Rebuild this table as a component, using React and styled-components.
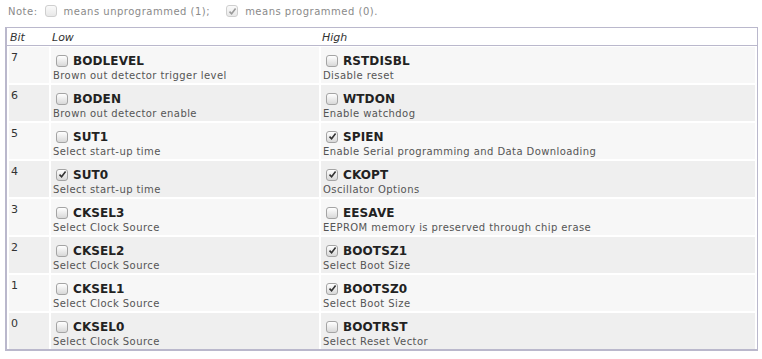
import React from "react";
import styled, { createGlobalStyle } from "styled-components";

const Global = createGlobalStyle`
  html, body { margin: 0; padding: 0; background: #fff; }
  body { font-family: "DejaVu Sans", Verdana, sans-serif; }
`;

const Page = styled.div`
  padding: 0 4px 0 5px;
  width: 762px;
  box-sizing: border-box;
`;

const Note = styled.div`
  display: flex;
  align-items: center;
  height: 22px;
  margin-bottom: 5px;
  padding-left: 3px;
  font-size: 10px;
  letter-spacing: 0.5px;
  color: #8a8a8a;
  gap: 7px;
`;

const NoteText = styled.span`
  margin-right: 9px;
`;

const Panel = styled.div`
  border: 1px solid #bab8cc;
  border-left-width: 2px;
  border-bottom-width: 2px;
  padding: 0 2px;
  width: 753px;
  box-sizing: border-box;
`;

const Grid = styled.div`
  display: grid;
  grid-template-columns: 40px 268px 1fr;
  column-gap: 2px;
  row-gap: 2px;
`;

const Header = styled.div`
  display: grid;
  grid-template-columns: 40px 268px 1fr;
  column-gap: 2px;
  height: 18px;
  align-items: center;
  border-bottom: 1px solid #bab8cc;
  margin: 0 -2px 1px -2px;
  padding: 2px 2px 0;
  box-sizing: border-box;
`;

const HeadCell = styled.div`
  font-style: italic;
  font-size: 11px;
  color: #333;
  padding-left: 1px;
`;

const Cell = styled.div`
  height: 36px;
  box-sizing: border-box;
  background: ${(p) => (p.$alt ? "#efefef" : "#f7f7f7")};
  padding: ${(p) => (p.$bit ? "4px 0 0 2px" : "6px 0 0 2px")};
  font-size: 11px;
  color: #333;
`;

const BitNum = styled.div`
  line-height: 13px;
`;

const NameLine = styled.div`
  display: flex;
  align-items: center;
  height: 15px;
  gap: 5px;
  padding-left: 3px;
`;

const Name = styled.span`
  font-weight: bold;
  font-size: 12px;
  color: #222;
  letter-spacing: 0.1px;
`;

const Desc = styled.div`
  font-size: 10px;
  line-height: 13px;
  color: #555;
  letter-spacing: 0.42px;
  margin-top: 1px;
`;

const Box = styled.span`
  display: inline-flex;
  align-items: center;
  justify-content: center;
  width: 12px;
  height: 12px;
  box-sizing: border-box;
  border-radius: 3px;
  border: 1px solid ${(p) => (p.$disabled ? "#cfcfcf" : "#a4a4a4")};
  background: ${(p) =>
    p.$disabled
      ? "linear-gradient(#fafafa, #e8e8e8)"
      : "linear-gradient(#ffffff, #d8d8d8)"};
  flex: none;
`;

function Check({ checked, disabled }) {
  return (
    <Box $disabled={disabled}>
      {checked && (
        <svg width="9" height="9" viewBox="0 0 9 9">
          <path
            d="M1.5 4.6 L3.6 6.8 L7.6 1.6"
            fill="none"
            stroke={disabled ? "#9a9a9a" : "#333"}
            strokeWidth="1.6"
          />
        </svg>
      )}
    </Box>
  );
}

const rows = [
  [7, ["BODLEVEL", "Brown out detector trigger level", false], ["RSTDISBL", "Disable reset", false]],
  [6, ["BODEN", "Brown out detector enable", false], ["WTDON", "Enable watchdog", false]],
  [5, ["SUT1", "Select start-up time", false], ["SPIEN", "Enable Serial programming and Data Downloading", true]],
  [4, ["SUT0", "Select start-up time", true], ["CKOPT", "Oscillator Options", true]],
  [3, ["CKSEL3", "Select Clock Source", false], ["EESAVE", "EEPROM memory is preserved through chip erase", false]],
  [2, ["CKSEL2", "Select Clock Source", false], ["BOOTSZ1", "Select Boot Size", true]],
  [1, ["CKSEL1", "Select Clock Source", false], ["BOOTSZ0", "Select Boot Size", true]],
  [0, ["CKSEL0", "Select Clock Source", false], ["BOOTRST", "Select Reset Vector", false]],
];

function Fuse({ data, alt }) {
  const [name, desc, checked] = data;
  return (
    <Cell $alt={alt}>
      <NameLine>
        <Check checked={checked} />
        <Name>{name}</Name>
      </NameLine>
      <Desc>{desc}</Desc>
    </Cell>
  );
}

export default function App() {
  return (
    <Page>
      <Global />
      <Note>
        <span>Note:</span>
        <Check disabled />
        <NoteText>means unprogrammed (1);</NoteText>
        <Check disabled checked />
        <span>means programmed (0).</span>
      </Note>
      <Panel>
        <Header>
          <HeadCell>Bit</HeadCell>
          <HeadCell>Low</HeadCell>
          <HeadCell>High</HeadCell>
        </Header>
        <Grid>
          {rows.map(([bit, low, high], i) => (
            <React.Fragment key={bit}>
              <Cell $alt={i % 2 === 1} $bit>
                <BitNum>{bit}</BitNum>
              </Cell>
              <Fuse data={low} alt={i % 2 === 1} />
              <Fuse data={high} alt={i % 2 === 1} />
            </React.Fragment>
          ))}
        </Grid>
      </Panel>
    </Page>
  );
}
